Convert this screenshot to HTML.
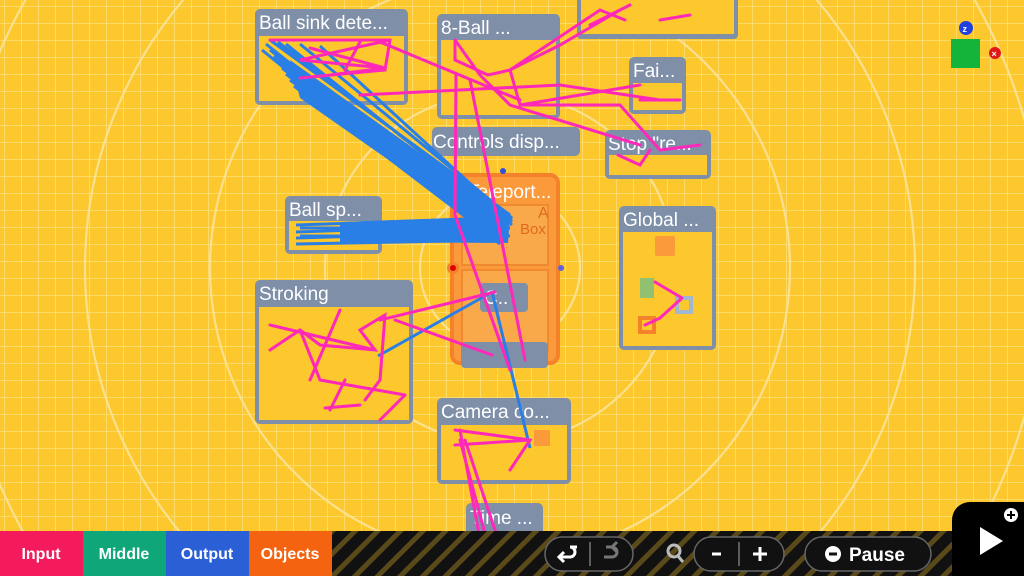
<!DOCTYPE html>
<html><head><meta charset="utf-8"><style>
html,body{margin:0;padding:0;width:1024px;height:576px;overflow:hidden;background:#fcc82e}
svg{position:absolute;left:0;top:0;display:block}
text{font-family:"Liberation Sans",sans-serif}
</style></head><body>
<svg width="1024" height="576" viewBox="0 0 1024 576" xmlns="http://www.w3.org/2000/svg">
<defs>
<pattern id="g" width="17" height="17" patternUnits="userSpaceOnUse" x="4" y="6">
<path d="M0 0H17M0 0V17" stroke="#fbe07a" stroke-width="1.6" fill="none"/>
</pattern>
<pattern id="st" width="16" height="16" patternUnits="userSpaceOnUse" patternTransform="rotate(45)">
<rect width="16" height="16" fill="#111"/><rect width="5" height="16" fill="#5a4a1a"/>
</pattern>
</defs>
<rect width="1024" height="576" fill="#fcc82e"/>
<rect width="1024" height="576" fill="url(#g)"/>
<g fill="none" stroke="#fbe49a" stroke-width="2.2" opacity="0.9">
<circle cx="500" cy="268" r="80"/><circle cx="500" cy="268" r="175"/>
<circle cx="500" cy="268" r="290"/><circle cx="500" cy="268" r="415"/>
<circle cx="500" cy="268" r="545"/>
</g>
<g>
<rect x="452" y="175" width="106" height="188" rx="8" fill="#fb9a3a" stroke="#f4822a" stroke-width="4"/>
<rect x="462" y="205" width="86" height="60" fill="#f9a84a" stroke="#f08a30" stroke-width="2"/>
<rect x="462" y="270" width="86" height="80" fill="#f9a84a" stroke="#f08a30" stroke-width="2"/>
<text x="468" y="198" font-size="19" fill="#fff">Teleport...</text>
<text x="538" y="218" font-size="16" fill="#e06a20">A</text>
<text x="520" y="234" font-size="15" fill="#e06a20">Box</text>
<circle cx="453" cy="268" r="6" fill="#f4822a"/><circle cx="453" cy="268" r="3" fill="#d00"/>
<circle cx="561" cy="268" r="3" fill="#6060e0"/><circle cx="503" cy="171" r="3" fill="#3050e0"/>
</g>
<g fill="#7f8fa8">
<path d="M577 -5h161v40a4 4 0 0 1-4 4h-153a4 4 0 0 1-4-4z"/>
<rect x="581" y="0" width="153" height="34" fill="#fcc82e"/>
<rect x="255" y="9" width="153" height="96" rx="5"/>
<rect x="259" y="36" width="145" height="65" fill="#fcc82e"/>
<rect x="437" y="14" width="123" height="105" rx="5"/>
<rect x="441" y="40" width="115" height="75" fill="#fcc82e"/>
<rect x="629" y="57" width="57" height="57" rx="5"/>
<rect x="633" y="83" width="49" height="27" fill="#fcc82e"/>
<rect x="432" y="127" width="148" height="29" rx="5"/>
<rect x="605" y="130" width="106" height="49" rx="5"/>
<rect x="609" y="155" width="98" height="20" fill="#fcc82e"/>
<rect x="285" y="196" width="97" height="58" rx="5"/>
<rect x="289" y="221" width="89" height="29" fill="#fcc82e"/>
<rect x="619" y="206" width="97" height="144" rx="5"/>
<rect x="623" y="232" width="89" height="114" fill="#fcc82e"/>
<rect x="255" y="280" width="158" height="144" rx="5"/>
<rect x="259" y="307" width="150" height="113" fill="#fcc82e"/>
<rect x="480" y="283" width="48" height="29" rx="4"/>
<rect x="461" y="342" width="87" height="26" rx="4"/>
<rect x="437" y="398" width="134" height="86" rx="5"/>
<rect x="441" y="425" width="126" height="55" fill="#fcc82e"/>
<rect x="466" y="503" width="77" height="40" rx="5"/>
</g>
<g fill="#fff" font-size="19">
<text x="259" y="29">Ball sink dete...</text>
<text x="441" y="34">8-Ball ...</text>
<text x="633" y="77">Fai...</text>
<text x="433" y="148">Controls disp...</text>
<text x="608" y="150">Stop "re...</text>
<text x="289" y="216">Ball sp...</text>
<text x="623" y="226">Global ...</text>
<text x="259" y="300">Stroking</text>
<text x="484" y="304">C..</text>
<text x="441" y="418">Camera co...</text>
<text x="470" y="524">Time ...</text>
</g>
<g fill="#fb9a3a">
<rect x="655" y="236" width="20" height="20" rx="2"/>
<rect x="640" y="318" width="14" height="14" fill="none" stroke="#f4822a" stroke-width="4"/>
<rect x="677" y="298" width="14" height="14" fill="none" stroke="#9fb8d0" stroke-width="4"/>
<rect x="640" y="278" width="14" height="20" fill="#90c070"/>
<rect x="534" y="430" width="16" height="16"/>
</g>
<g stroke="#2a7fe6" stroke-width="3" fill="none">
<path d="M266 44L505 235M270 50L505 238M274 56L505 240M278 62L503 242M282 68L500 240M286 74L500 236M290 80L498 232M294 86L496 240M270 40L510 215M278 42L512 220M286 44L512 225M262 50L500 244M300 44L512 218M320 46L512 222"/>
<path d="M296 225L505 218M296 232L505 225M296 238L505 232M296 244L505 240M300 228L510 228M300 236L510 236"/>
<path d="M378 356L492 292M492 292L530 448"/>
</g>
<path d="M290 60L508 216L506 242L300 98Z" fill="#2a7fe6"/>
<path d="M340 222L510 216L508 243L340 242Z" fill="#2a7fe6"/>
<g stroke="#ff28b8" stroke-width="3" fill="none" stroke-linecap="round">
<path d="M270 40L390 40L385 70L300 78M390 40L300 60L385 68L310 48M385 68L330 75M360 42L345 70"/>
<path d="M360 95L560 85L660 100M455 40L455 60L488 75L510 70L560 45L620 10M510 70L520 105L640 85M455 40L480 75L510 105L640 145M520 105L620 105L660 150L700 145"/>
<path d="M380 42L520 100M456 75L455 215L510 370M470 80L525 360"/>
<path d="M510 70L600 10L625 20M590 25L630 5M660 20L690 15"/>
<path d="M640 100L680 100M618 155L640 165L650 150"/>
<path d="M270 350L300 330L320 345L375 350L360 330L385 315L380 380L365 400M300 330L320 380L405 395M270 325L375 350M340 310L310 380M345 380L330 410M325 408L360 405M380 320L495 292M395 320L492 355M405 395L380 420"/>
<path d="M682 298L660 318L645 325M682 298L655 282"/>
<path d="M455 430L530 440L510 470M455 445L530 440M460 430L480 540M465 440L500 545M460 440L488 545"/>
</g>
<rect x="951" y="39" width="29" height="29" fill="#14b43a"/>
<circle cx="966" cy="28" r="7" fill="#2040e0"/><text x="962.5" y="32" font-size="9" fill="#fff" font-weight="bold">z</text>
<circle cx="995" cy="53" r="6" fill="#e01818"/><text x="991.5" y="57" font-size="9" fill="#fff" font-weight="bold">×</text>
<rect x="0" y="531" width="1024" height="45" fill="url(#st)"/>
<rect x="0" y="531" width="83" height="45" fill="#f31b5b"/>
<rect x="83" y="531" width="83" height="45" fill="#0fa77a"/>
<rect x="166" y="531" width="83" height="45" fill="#2b5fd6"/>
<rect x="249" y="531" width="83" height="45" fill="#f46410"/>
<g font-size="16" fill="#fff" font-weight="bold" text-anchor="middle">
<text x="41" y="559">Input</text><text x="124" y="559">Middle</text>
<text x="207" y="559">Output</text><text x="290" y="559">Objects</text>
</g>
<g fill="#111" stroke="#666" stroke-width="1.5">
<rect x="545" y="537" width="88" height="34" rx="17"/>
<rect x="694" y="537" width="90" height="34" rx="17"/>
<rect x="805" y="537" width="126" height="34" rx="17"/>
</g>
<path d="M952 576V520a18 18 0 0 1 18-18h54v74z" fill="#000"/>
<path d="M980 527l23 14-23 14z" fill="#fff"/>
<circle cx="1011" cy="515" r="7" fill="#fff"/><path d="M1011 511v8M1007 515h8" stroke="#000" stroke-width="2"/>
<g stroke="#fff" stroke-width="3" fill="none">
<path d="M577 547h-7a5 5 0 0 1 0 10h-10M564 552l-5 5 5 5"/>
<path d="M604 557h8a5 5 0 0 0 0-10h-6M617 552l-5-5 5-5" stroke="#777"/>
<path d="M712 554h9M753 554h14M760 547v14"/>
<circle cx="674" cy="551" r="6" stroke="#bbb"/><path d="M678 556l5 6" stroke="#bbb"/>
</g>
<line x1="590" y1="542" x2="590" y2="566" stroke="#777" stroke-width="1.5"/>
<line x1="739" y1="542" x2="739" y2="566" stroke="#777" stroke-width="1.5"/>
<circle cx="833" cy="554" r="8" fill="#fff"/><rect x="829" y="552.5" width="8" height="3" fill="#111"/>
<text x="849" y="561" font-size="19" fill="#fff" font-weight="bold">Pause</text>
</svg>
</body></html>
